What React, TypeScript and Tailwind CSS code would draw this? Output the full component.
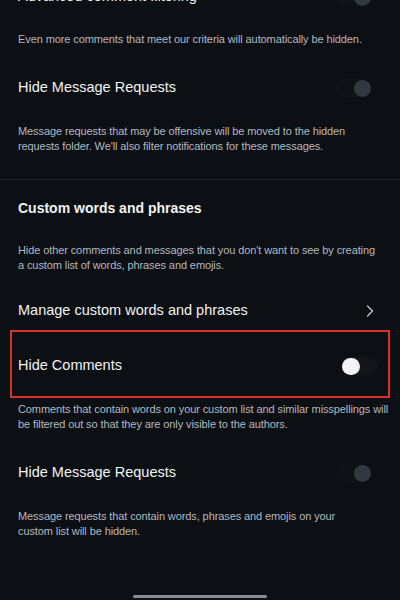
import { ChevronRight } from 'lucide-react';

function Toggle({ on }: { on: boolean }) {
  return on ? (
    <div className="w-[36px] h-[18px] rounded-full bg-[#12151a] flex items-center">
      <div className="w-[18px] h-[17px] rounded-full bg-[#f4f4f4]" />
    </div>
  ) : (
    <div className="w-[36px] h-[18px] rounded-full bg-[#0f1217] flex items-center justify-end">
      <div className="w-[17px] h-[17px] rounded-full bg-[#33373f]" />
    </div>
  );
}

function Desc({ children, className = '' }: { children: React.ReactNode; className?: string }) {
  return (
    <p className={`text-[11px] leading-[15px] tracking-[-0.1px] text-[#b4b8c0] pl-[18px] ${className}`}>
      {children}
    </p>
  );
}

export default function App() {
  return (
    <div
      className="w-[400px] h-[600px] overflow-hidden bg-[#0c0f14] relative"
      style={{ fontFamily: '"Liberation Sans", Arial, sans-serif' }}
    >
      <div className="flex flex-col -mt-[13px]">
        {/* ADVANCED FILTERING (cut off) */}
        <div className="flex items-center justify-between h-[20px] pl-[18px] pr-[29px]">
          <span className="text-[14.5px] text-[#f2f2f2]">Advanced comment filtering</span>
          <Toggle on={false} />
        </div>
        <Desc className="mt-[25px] pr-[10px]">
          Even more comments that meet our criteria will automatically be hidden.
        </Desc>

        {/* HIDE MESSAGE REQUESTS */}
        <div className="flex items-center justify-between h-[20px] pl-[18px] pr-[29px] mt-[31px]">
          <span className="text-[14.5px] text-[#f2f2f2]">Hide Message Requests</span>
          <Toggle on={false} />
        </div>
        <Desc className="mt-[26px] pr-[40px]">
          Message requests that may be offensive will be moved to the hidden requests folder. We'll also filter notifications for these messages.
        </Desc>

        <div className="h-px bg-[#20242b] mt-[25px]" />

        {/* CUSTOM WORDS */}
        <div className="h-[20px] flex items-center pl-[18px] mt-[18px]">
          <span className="text-[14px] font-bold text-[#f2f2f2]">Custom words and phrases</span>
        </div>
        <Desc className="mt-[25px] pr-[20px]">
          Hide other comments and messages that you don't want to see by creating a custom list of words, phrases and emojis.
        </Desc>

        <div className="flex items-center justify-between h-[20px] pl-[18px] pr-[20px] mt-[28px]">
          <span className="text-[14.5px] text-[#f2f2f2]">Manage custom words and phrases</span>
          <ChevronRight size={20} strokeWidth={1.5} className="text-[#c4c6cc]" />
        </div>

        {/* HIDE COMMENTS (highlighted) */}
        <div className="mx-[10px] mt-[9px] h-[68px] border-2 border-[#d9302a] flex items-center justify-between pl-[6px] pr-[10px]">
          <span className="text-[14.5px] text-[#f2f2f2] mt-[4px]">Hide Comments</span>
          <div className="mt-[4px]">
            <Toggle on={true} />
          </div>
        </div>
        <Desc className="mt-[4px] pr-[10px]">
          Comments that contain words on your custom list and similar misspellings will be filtered out so that they are only visible to the authors.
        </Desc>

        <div className="flex items-center justify-between h-[20px] pl-[18px] pr-[29px] mt-[31px]">
          <span className="text-[14.5px] text-[#f2f2f2]">Hide Message Requests</span>
          <Toggle on={false} />
        </div>
        <Desc className="mt-[26px] pr-[40px]">
          Message requests that contain words, phrases and emojis on your custom list will be hidden.
        </Desc>
      </div>

      {/* HOME INDICATOR */}
      <div className="absolute bottom-[2px] left-[133px] w-[134px] h-[3px] rounded-full bg-[#8a8c90]" />
    </div>
  );
}
